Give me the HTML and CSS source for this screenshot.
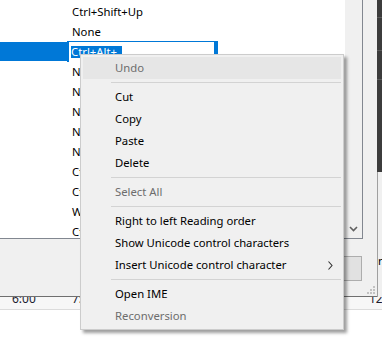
FILE: index.html
```html
<!DOCTYPE html>
<html lang="en">
<head>
  <meta charset="UTF-8">
  <title>Hotkey list context menu</title>
  <link rel="stylesheet" href="styles.css">
</head>
<body>
  <div class="desktop">
    <div class="dialog">
      <div class="listbox">
        <div class="list">
          <div class="row">Ctrl+Shift+Up</div>
          <div class="row">None</div>
          <div class="row row-edit">
            <div class="sel-cell"></div>
            <div class="edit"><span class="edit-sel">Ctrl+Alt+</span></div>
          </div>
          <div class="row">None</div>
          <div class="row">None</div>
          <div class="row">None</div>
          <div class="row">None</div>
          <div class="row">None</div>
          <div class="row">Ctrl+Q</div>
          <div class="row">Ctrl+W</div>
          <div class="row">Win+E</div>
          <div class="row">Ctrl+R</div>
        </div>
        <div class="vscroll">
          <svg width="9" height="6" viewBox="0 0 9 6"><polyline points="1,1 4.5,4.5 8,1" fill="none" stroke="#606060" stroke-width="1.6"/></svg>
        </div>
      </div>
      <div class="lower">
        <div class="button"></div>
        <svg class="grip" width="9" height="9" viewBox="0 0 9 9">
          <rect x="6" y="0" width="2" height="2" fill="#c2c2c2"/>
          <rect x="3" y="3" width="2" height="2" fill="#c2c2c2"/>
          <rect x="6" y="3" width="2" height="2" fill="#c2c2c2"/>
          <rect x="0" y="6" width="2" height="2" fill="#c2c2c2"/>
          <rect x="3" y="6" width="2" height="2" fill="#c2c2c2"/>
          <rect x="6" y="6" width="2" height="2" fill="#c2c2c2"/>
        </svg>
      </div>
    </div>
    <div class="behind">
      <div class="behind-dark"></div>
      <div class="behind-light"><span class="behind-text">n</span></div>
    </div>
  </div>
  <div class="status">
    <span class="time t1">6:00</span>
    <span class="time t2">7:00</span>
    <span class="time t3">12:00</span>
  </div>

  <div class="menu">
    <div class="item disabled hover">Undo</div>
    <div class="sep"></div>
    <div class="item">Cut</div>
    <div class="item">Copy</div>
    <div class="item">Paste</div>
    <div class="item">Delete</div>
    <div class="sep"></div>
    <div class="item disabled">Select All</div>
    <div class="sep"></div>
    <div class="item">Right to left Reading order</div>
    <div class="item">Show Unicode control characters</div>
    <div class="item has-sub">Insert Unicode control character
      <svg class="sub-arrow" width="5" height="9" viewBox="0 0 5 9"><polyline points="0.5,0.5 4,4.5 0.5,8.5" fill="none" stroke="#333" stroke-width="1.1"/></svg>
    </div>
    <div class="sep"></div>
    <div class="item">Open IME</div>
    <div class="item disabled">Reconversion</div>
  </div>
</body>
</html>
```

FILE: styles.css
```css
body {
  margin: 0;
  width: 382px;
  height: 344px;
  overflow: hidden;
  position: relative;
  background: #ffffff;
  font-family: 'Segoe UI', 'Noto Sans', sans-serif;
  font-size: 11.3px;
  color: #000000;
}

.desktop {
  display: flex;
  height: 297px;
}

.dialog {
  width: 377px;
  height: 297px;
  box-sizing: border-box;
  background: #f0f0f0;
  border-bottom: 1px solid #6f6f6f;
  display: flex;
  flex-direction: column;
}

.listbox {
  width: 363px;
  height: 239px;
  box-sizing: border-box;
  display: flex;
  border-right: 1px solid #828790;
  border-bottom: 1px solid #828790;
}

.list {
  flex: 1;
  background: #ffffff;
  padding-top: 2px;
  overflow: hidden;
}

.row {
  height: 20px;
  line-height: 20px;
  padding-left: 72px;
  white-space: nowrap;
}

.row-edit {
  display: flex;
  padding-left: 0;
}

.sel-cell {
  width: 67px;
  height: 19px;
  background: #0078d7;
}

.edit {
  width: 143px;
  height: 20px;
  margin-top: -1px;
  background: #ffffff;
  border-top: 1px solid #0078d7;
  border-left: 2px solid #0078d7;
  border-right: 4px solid #0078d7;
  padding-left: 2px;
  display: flex;
  align-items: center;
}

.edit-sel {
  background: #0078d7;
  color: #ffffff;
  line-height: 12px;
  padding-right: 5px;
}

.vscroll {
  width: 17px;
  background: #f0f0f0;
  display: flex;
  align-items: flex-end;
  justify-content: center;
  padding-bottom: 6px;
  box-sizing: border-box;
}

.lower {
  flex: 1;
  display: grid;
  grid-template-columns: 1fr 15px;
  grid-template-rows: 17px 25px 1fr;
}

.button {
  grid-column: 1;
  grid-row: 2;
  justify-self: end;
  width: 80px;
  background: #e1e1e1;
  border: 1px solid #adadad;
  box-sizing: border-box;
}

.grip {
  grid-column: 2;
  grid-row: 3;
  justify-self: end;
  align-self: end;
  margin: 0 1px 1px 0;
}

.behind {
  width: 5px;
  display: flex;
  flex-direction: column;
}

.behind-dark {
  height: 172px;
  background:
    linear-gradient(#5a5a5a, #5a5a5a) 0 17px / 100% 1px no-repeat,
    linear-gradient(#5a5a5a, #5a5a5a) 0 50px / 100% 1px no-repeat,
    linear-gradient(#5a5a5a, #5a5a5a) 0 79px / 100% 1px no-repeat,
    #3c3c3c;
}

.behind-light {
  flex: 1;
  background: #f0f0f0;
  border-left: 1px solid #a0a0a0;
  padding-top: 83px;
  overflow: hidden;
}

.behind-text {
  display: block;
  line-height: 12px;
}

.status {
  height: 12px;
  overflow: hidden;
  background: #f7f7f7;
  border-bottom: 1px solid #dcdcdc;
  display: flex;
  color: #1c1c30;
  font-size: 12px;
}

.time {
  flex-shrink: 0;
  line-height: 12px;
  margin-top: -4px;
  white-space: nowrap;
}

.t1 {
  margin-left: 12px;
  width: 60px;
}

.t2 {
  width: 297px;
}

/* context menu */
.menu {
  position: absolute;
  left: 80px;
  top: 54px;
  width: 264px;
  box-sizing: border-box;
  background: #f0f0f0;
  border: 1px solid #cccccc;
  padding: 2px;
  box-shadow: 3px 3px 3px rgba(0, 0, 0, 0.38);
}

.item {
  height: 22px;
  line-height: 22px;
  padding-left: 32px;
  white-space: nowrap;
  display: flex;
  align-items: center;
}

.item.hover {
  background: #e6e6e6;
}

.item.disabled {
  color: #6d6d6d;
}

.sub-arrow {
  margin-left: auto;
  margin-right: 8px;
}

.sep {
  height: 7px;
  margin-left: 28px;
  background: linear-gradient(#d3d3d3, #d3d3d3) 0 3px / 100% 1px no-repeat;
}
```
